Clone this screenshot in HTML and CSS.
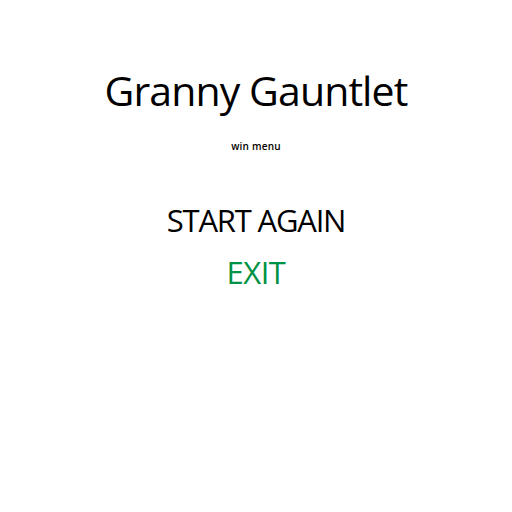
FILE: index.html
```html
<!DOCTYPE html>
<html>
<head>
<meta charset="utf-8">
<link rel="stylesheet" href="styles.css">
</head>
<body>
<main class="menu">
  <h1 class="title">Granny Gauntlet</h1>
  <p class="subtitle">win menu</p>
  <nav class="options">
    <span class="option">START AGAIN</span>
    <span class="option option-exit">EXIT</span>
  </nav>
</main>
</body>
</html>
```
FILE: styles.css
```css
html, body {
  margin: 0;
  padding: 0;
  background: #ffffff;
}
.menu {
  display: flex;
  flex-direction: column;
  align-items: center;
  font-family: "Open Sans", sans-serif;
  color: #000;
  padding-top: 65px;
}
.title {
  margin: 0;
  font-size: 41px;
  font-weight: 400;
  line-height: 50px;
  letter-spacing: -0.9px;
}
.subtitle {
  margin: 24px 0 0;
  font-size: 10px;
  font-weight: 600;
  line-height: 14px;
  letter-spacing: 0.2px;
}
.options {
  display: flex;
  flex-direction: column;
  align-items: center;
  margin-top: 46px;
  gap: 10px;
}
.option {
  font-size: 31px;
  line-height: 42px;
  letter-spacing: -1.2px;
}
.option-exit {
  color: #009245;
  letter-spacing: -0.5px;
}
```
